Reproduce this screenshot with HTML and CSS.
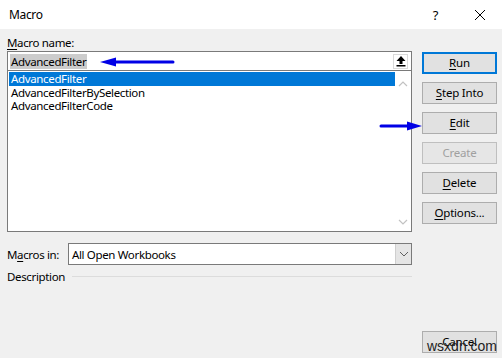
FILE: index.html
```html
<!DOCTYPE html>
<html>
<head>
<meta charset="utf-8">
<link rel="stylesheet" href="styles.css">
</head>
<body>
<div class="dialog">
  <div class="titlebar">
    <span class="title">Macro</span>
    <span class="help">?</span>
    <svg class="close" width="12" height="12" viewBox="0 0 12 12"><path d="M1 1 L11 11 M11 1 L1 11" stroke="#000" stroke-width="1" fill="none"/></svg>
  </div>
  <div class="main">
    <div class="left">
      <div class="label"><u>M</u>acro name:</div>
      <div class="input">
        <span class="sel">AdvancedFilter</span>
        <span class="upbtn"><svg width="12" height="12" viewBox="0 0 12 12"><path d="M6 1 L10.5 6 L7.5 6 L7.5 9 L4.5 9 L4.5 6 L1.5 6 Z" fill="#000"/><rect x="1.5" y="10" width="9" height="1.5" fill="#000"/></svg></span>
      </div>
      <div class="list">
        <div class="items">
          <div class="item active">AdvancedFilter</div>
          <div class="item">AdvancedFilterBySelection</div>
          <div class="item">AdvancedFilterCode</div>
        </div>
        <div class="scroll">
          <svg width="10" height="6" viewBox="0 0 10 6"><path d="M1 5 L5 1 L9 5" stroke="#c2c2c2" stroke-width="1.2" fill="none"/></svg>
          <svg width="10" height="6" viewBox="0 0 10 6"><path d="M1 1 L5 5 L9 1" stroke="#c2c2c2" stroke-width="1.2" fill="none"/></svg>
        </div>
      </div>
      <div class="macrosin">
        <span class="mlabel">M<u>a</u>cros in:</span>
        <div class="select">
          <span class="selval">All Open Workbooks</span>
          <span class="dd"><svg width="10" height="6" viewBox="0 0 10 6"><path d="M1 1 L5 5 L9 1" stroke="#606060" stroke-width="1" fill="none"/></svg></span>
        </div>
      </div>
      <div class="desc">
        <span>Description</span>
        <span class="rule"></span>
      </div>
    </div>
    <div class="right">
      <button class="btn default"><u>R</u>un</button>
      <button class="btn"><u>S</u>tep Into</button>
      <button class="btn"><u>E</u>dit</button>
      <button class="btn disabled">Create</button>
      <button class="btn"><u>D</u>elete</button>
      <button class="btn"><u>O</u>ptions...</button>
    </div>
  </div>
  <div class="footer">
    <button class="btn">Cancel</button>
  </div>
  <svg class="arrow arrow1" width="76" height="10" viewBox="0 0 76 10"><path d="M14 5 L73 5" stroke="#0000e6" stroke-width="3" stroke-linecap="round"/><path d="M0 5 L16 0.5 L16 9.5 Z" fill="#0000e6"/></svg>
  <svg class="arrow arrow2" width="44" height="10" viewBox="0 0 44 10"><path d="M2 5 L30 5" stroke="#0000e6" stroke-width="3" stroke-linecap="round"/><path d="M43 5 L28 0.5 L28 9.5 Z" fill="#0000e6"/></svg>
  <div class="watermark">wsxdn.com</div>
</div>
</body>
</html>
```
FILE: styles.css
```css
* { box-sizing: border-box; }
html, body { margin: 0; padding: 0; }
body {
  width: 502px;
  height: 358px;
  overflow: hidden;
  font-family: "Noto Sans", "DejaVu Sans", sans-serif;
  font-size: 11.5px;
  letter-spacing: -0.35px;
  color: #000;
  background: #f0f0f0;
}
u { text-decoration: underline; text-underline-offset: 2px; }
.dialog { position: relative; width: 502px; height: 358px; }
.titlebar {
  height: 29px;
  background: #fff;
  display: flex;
  align-items: center;
  padding-left: 9px;
}
.title { flex: 1; font-size: 12px; }
.help { font-size: 13px; margin-right: 36px; }
.close { margin-right: 16px; }
.main { display: flex; padding: 0 5px 0 7px; }
.left { width: 406px; }
.label { height: 22px; padding-top: 7px; line-height: 14px; }
.input {
  height: 20px;
  border: 1px solid #7a7a7a;
  background: #fff;
  display: flex;
  align-items: center;
  padding-left: 2px;
  padding-right: 3px;
}
.sel { background: #cccccc; line-height: 15px; padding: 0 1px; flex: none; }
.upbtn {
  margin-left: auto;
  width: 15px;
  height: 15px;
  background: #fff;
  border: 1px solid #d9d9d9;
  display: flex;
  align-items: center;
  justify-content: center;
}
.list {
  height: 162px;
  margin-top: -1px;
  border: 1px solid #7a7a7a;
  background: #fff;
  display: flex;
}
.items { flex: 1; padding: 1px 0 0 1px; }
.item { height: 13px; line-height: 13px; padding-left: 2px; }
.item.active { background: #0078d7; color: #fff; height: 14px; line-height: 14px; }
.scroll {
  width: 16px;
  display: flex;
  flex-direction: column;
  justify-content: space-between;
  align-items: center;
  padding: 10px 0 6px;
}
.macrosin { display: flex; align-items: center; margin-top: 11px; height: 22px; }
.mlabel { width: 61px; }
.select {
  flex: 1;
  height: 22px;
  border: 1px solid #7a7a7a;
  background: #fff;
  display: flex;
  align-items: center;
}
.selval { flex: 1; padding-left: 3px; }
.dd {
  width: 16px;
  height: 20px;
  background: #e5e5e5;
  border-left: 1px solid #cfcfcf;
  display: flex;
  align-items: center;
  justify-content: center;
}
.desc { display: flex; align-items: center; margin-top: 2px; height: 18px; }
.rule { flex: 1; height: 1px; background: #dcdcdc; margin-left: 7px; margin-top: 0; }
.right {
  margin-left: 10px;
  margin-top: 23px;
  width: 75px;
  display: flex;
  flex-direction: column;
  gap: 8px;
}
.btn {
  width: 75px;
  height: 22px;
  font-family: inherit;
  font-size: 11.5px;
  letter-spacing: -0.2px;
  color: #000;
  background: #e1e1e1;
  border: 1px solid #adadad;
  padding: 0;
  line-height: 18px;
}
.btn.default { border: 2px solid #0078d7; }
.btn.disabled { color: #a0a0a0; border-color: #bfbfbf; background: #e6e6e6; }
.footer { display: flex; justify-content: flex-end; padding-right: 5px; margin-top: 46px; }
.arrow { position: absolute; }
.arrow1 { left: 100px; top: 57px; }
.arrow2 { left: 379px; top: 121px; }
.watermark {
  position: absolute;
  left: 427px;
  top: 338px;
  font-family: "Liberation Sans", sans-serif;
  font-size: 14px;
  letter-spacing: 0;
  color: #222;
}
```
